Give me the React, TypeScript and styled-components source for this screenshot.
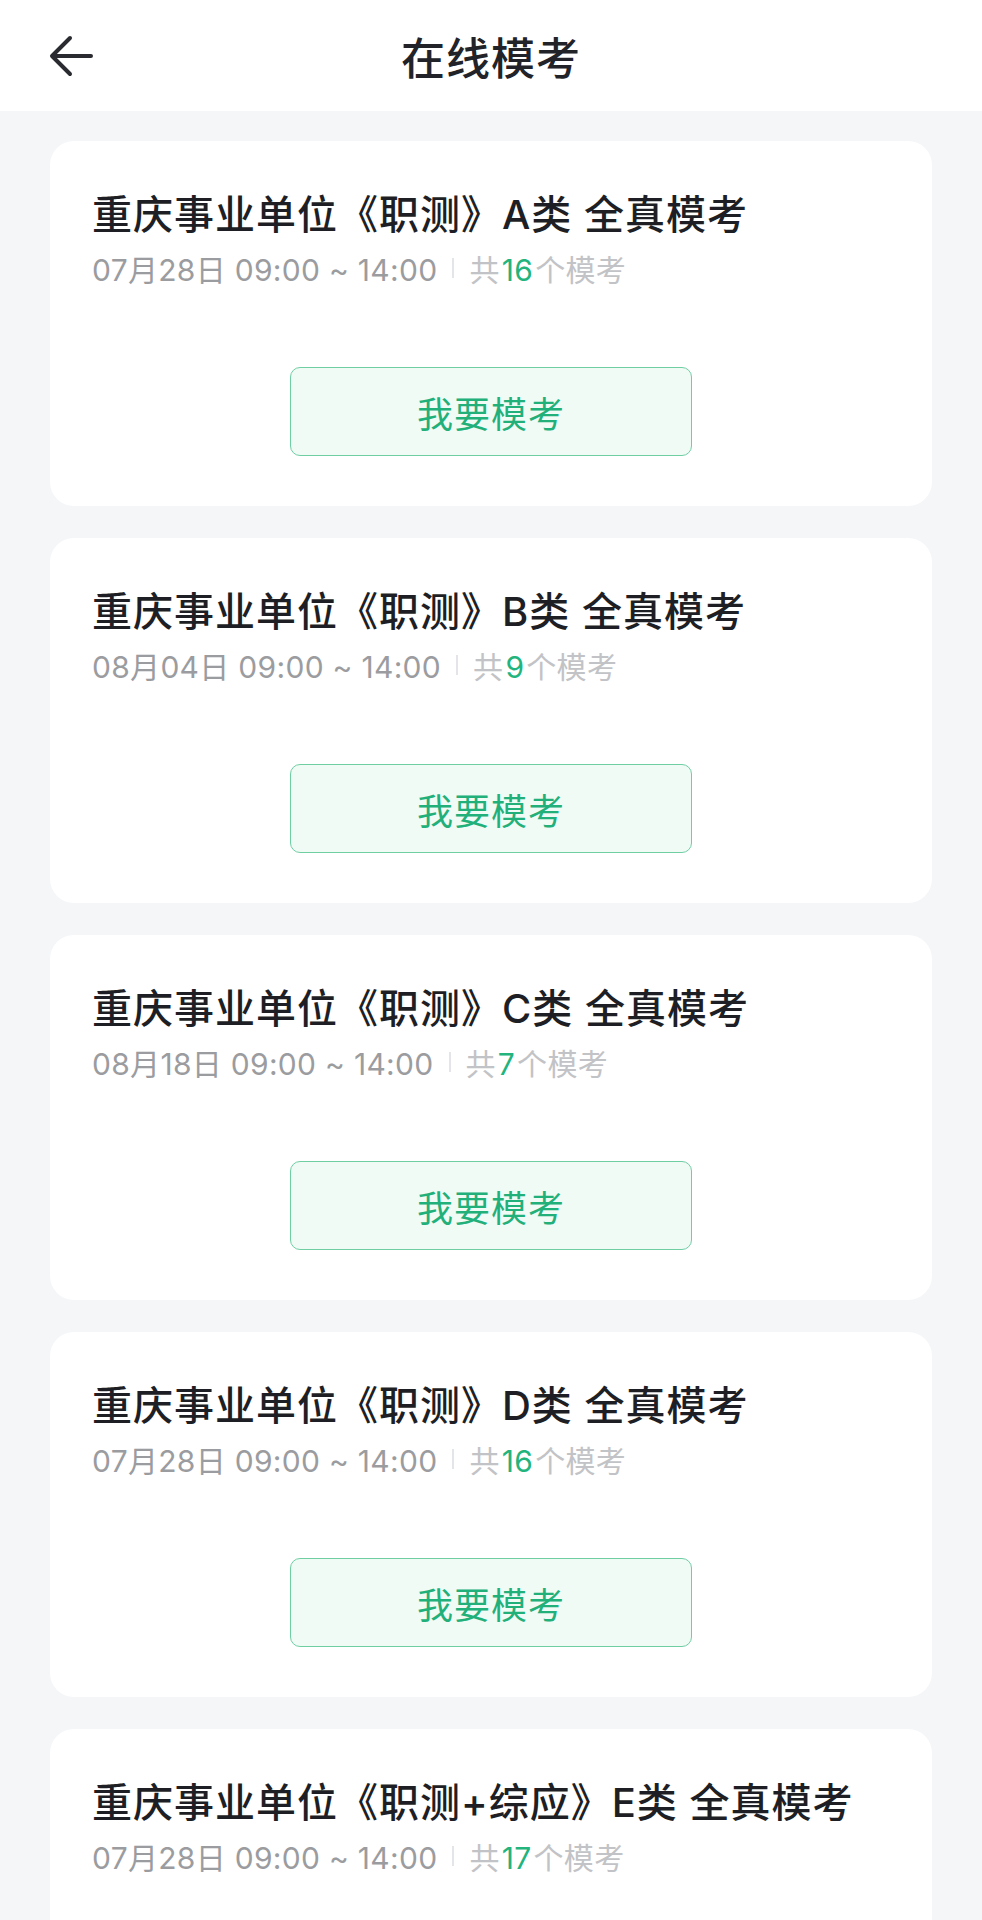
import React from 'react';
import styled, { createGlobalStyle } from 'styled-components';

const GlobalStyle = createGlobalStyle`
  html, body {
    margin: 0;
    padding: 0;
    background: #f5f6f8;
  }
  body {
    font-family: "Inter", "Noto Sans CJK SC", "Noto Sans", sans-serif;
    -webkit-font-smoothing: antialiased;
  }
`;

const Page = styled.div`
  width: 982px;
  min-height: 1920px;
  background: #f5f6f8;
`;

const Header = styled.header`
  height: 111px;
  background: #ffffff;
  display: flex;
  align-items: center;
  justify-content: center;
  position: relative;

  .header__back {
    position: absolute;
    left: 48px;
    top: 34px;
    width: 46px;
    height: 44px;
    display: flex;
    align-items: center;
    justify-content: center;
  }

  .header__title {
    font-family: "Noto Sans CJK SC", sans-serif;
    font-size: 44px;
    font-weight: 500;
    color: #222328;
    letter-spacing: 1px;
  }
`;

const List = styled.div`
  padding: 30px 50px 0 50px;
  display: flex;
  flex-direction: column;
  gap: 32px;
`;

const Card = styled.div`
  background: #ffffff;
  border-radius: 24px;
  padding: 46px 42px 50px 42px;
  display: flex;
  flex-direction: column;
`;

const Title = styled.div`
  font-size: 40px;
  line-height: 56px;
  font-weight: 500;
  letter-spacing: 1px;
  color: #1e1f25;
  white-space: nowrap;
`;

const Meta = styled.div`
  margin-top: 5px;
  height: 40px;
  display: flex;
  align-items: center;
  font-size: 30px;
  font-weight: 400;
  letter-spacing: 0.3px;
  white-space: nowrap;

  .meta__date {
    color: #9b9ca0;
  }

  .meta__sep {
    width: 2px;
    height: 20px;
    background: #e4e5e8;
    margin: 0 15px;
  }

  .meta__count {
    color: #c2c3c6;
  }
`;

const Count = styled.span`
  color: #22b47c;
  margin: 0 2px;
`;

const ActionButton = styled.button`
  margin: 79px auto 0 auto;
  width: 402px;
  height: 89px;
  border: 1.5px solid #6fcfa3;
  border-radius: 10px;
  background: #f1fbf6;
  color: #22b07a;
  font-family: "Noto Sans CJK SC", sans-serif;
  font-size: 36px;
  font-weight: 400;
  letter-spacing: 1px;
  cursor: pointer;
`;

const exams = [
  { title: '重庆事业单位《职测》A类 全真模考', date: '07月28日 09:00 ~ 14:00', count: 16 },
  { title: '重庆事业单位《职测》B类 全真模考', date: '08月04日 09:00 ~ 14:00', count: 9 },
  { title: '重庆事业单位《职测》C类 全真模考', date: '08月18日 09:00 ~ 14:00', count: 7 },
  { title: '重庆事业单位《职测》D类 全真模考', date: '07月28日 09:00 ~ 14:00', count: 16 },
  { title: '重庆事业单位《职测+综应》E类 全真模考', date: '07月28日 09:00 ~ 14:00', count: 17 },
];

const BackIcon = () => (
  <svg width="44" height="42" viewBox="0 0 44 42" fill="none">
    <path
      d="M42 21H4M21 3L3 21L21 39"
      stroke="#2a2b30"
      strokeWidth="4"
      strokeLinecap="round"
      strokeLinejoin="round"
    />
  </svg>
);

const App: React.FunctionComponent = () => {
  return (
    <Page>
      <GlobalStyle />
      <Header>
        <div className="header__back">
          <BackIcon />
        </div>
        <span className="header__title">在线模考</span>
      </Header>
      <List>
        {exams.map((exam, i) => (
          <Card key={i}>
            <Title>{exam.title}</Title>
            <Meta>
              <span className="meta__date">{exam.date}</span>
              <span className="meta__sep" />
              <span className="meta__count">
                共<Count>{exam.count}</Count>个模考
              </span>
            </Meta>
            <ActionButton>我要模考</ActionButton>
          </Card>
        ))}
      </List>
    </Page>
  );
};

export default App;
